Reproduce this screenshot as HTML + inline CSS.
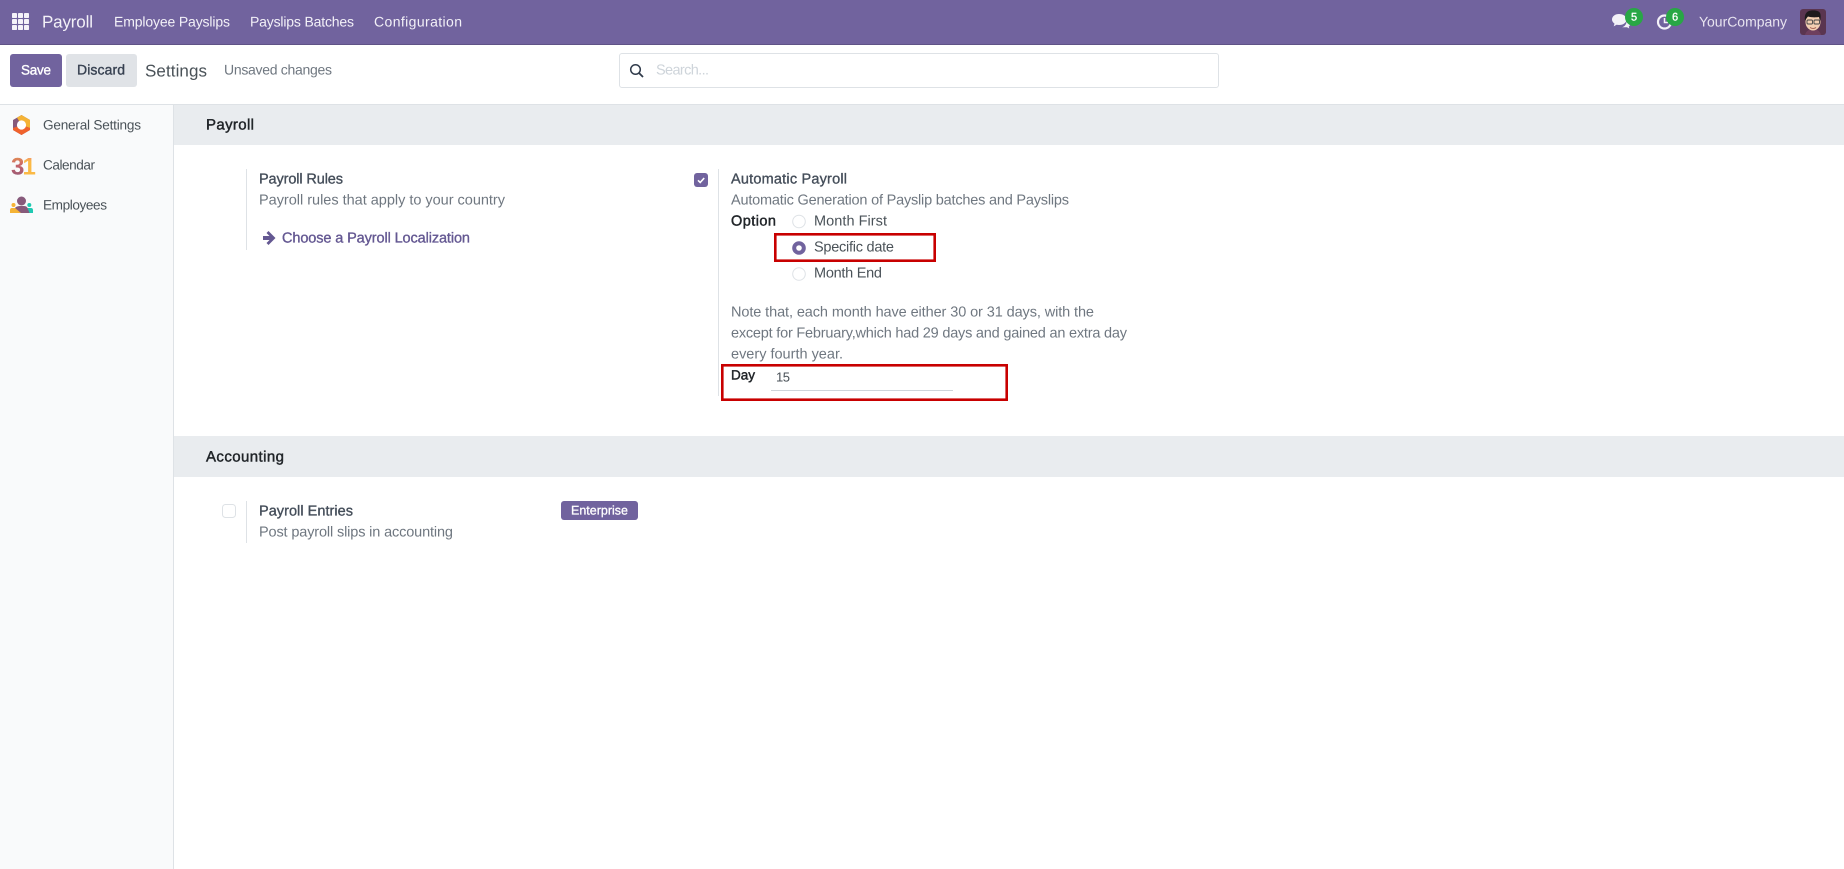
<!DOCTYPE html>
<html lang="en">
<head>
<meta charset="utf-8">
<title>Settings - Payroll</title>
<style>
html,body{margin:0;padding:0;width:1844px;height:869px;overflow:hidden;background:#fff}
.box{position:absolute;box-sizing:border-box}
svg{position:absolute;left:0;top:0}
text{font-family:"Liberation Sans",sans-serif;font-size:14.5px;white-space:pre;text-rendering:geometricPrecision;transform:translateY(-.5px)}
.nav{fill:#f3f1f8;font-size:14px}
.dark{fill:#454e5a;stroke:#454e5a;stroke-width:.35px}
.mut{fill:#6f7780}
.side{fill:#4a5258;font-size:13.6px}
.head{fill:#212529;stroke:#212529;stroke-width:.45px;font-size:15px}
.lab{fill:#212529;stroke:#212529;stroke-width:.45px;font-size:14px}
.opt{fill:#4a5258}
</style>
</head>
<body>
<div class="box" style="left:0;top:0;width:1844px;height:45px;background:#71639e;border-bottom:1px solid #5f5386"></div>
<div class="box" style="left:0;top:104px;width:1844px;height:1px;background:#dee2e6"></div>
<div class="box" style="left:0;top:105px;width:174px;height:764px;background:#f9fafb;border-right:1px solid #dee2e6"></div>
<div class="box" style="left:174px;top:105px;width:1670px;height:40px;background:#e9ecef"></div>
<div class="box" style="left:174px;top:436px;width:1670px;height:41px;background:#e9ecef"></div>
<div class="box" style="left:10px;top:54px;width:52px;height:33px;background:#71639e;border-radius:3px"></div>
<div class="box" style="left:66px;top:54px;width:71px;height:33px;background:#e0e3e7;border-radius:3px"></div>
<div class="box" style="left:619px;top:53px;width:600px;height:35px;background:#fff;border:1px solid #dee2e6;border-radius:3px"></div>
<div class="box" style="left:246px;top:169px;width:1px;height:81px;background:#dee2e6"></div>
<div class="box" style="left:718px;top:169px;width:1px;height:227px;background:#dee2e6"></div>
<div class="box" style="left:246px;top:501px;width:1px;height:42px;background:#dee2e6"></div>
<div class="box" style="left:771px;top:390px;width:182px;height:1px;background:#ced4da"></div>
<div class="box" style="left:561px;top:501px;width:77px;height:19px;background:#71639e;border-radius:3px"></div>

<svg width="1844" height="869" viewBox="0 0 1844 869" xmlns="http://www.w3.org/2000/svg">
<defs>
<linearGradient id="g3" x1="0" y1="0" x2="0" y2="1"><stop offset="0" stop-color="#f0a04b"/><stop offset=".45" stop-color="#c4606a"/><stop offset="1" stop-color="#875a7b"/></linearGradient>
<linearGradient id="g1" x1="0" y1="0" x2="0" y2="1"><stop offset="0" stop-color="#e8748a"/><stop offset=".3" stop-color="#fbb945"/><stop offset="1" stop-color="#fbb945"/></linearGradient>
</defs>

<!-- apps grid -->
<g fill="#f5f3f9">
<rect x="12" y="13" width="5" height="5" rx=".8"/><rect x="18" y="13" width="5" height="5" rx=".8"/><rect x="24" y="13" width="5" height="5" rx=".8"/>
<rect x="12" y="19" width="5" height="5" rx=".8"/><rect x="18" y="19" width="5" height="5" rx=".8"/><rect x="24" y="19" width="5" height="5" rx=".8"/>
<rect x="12" y="25" width="5" height="5" rx=".8"/><rect x="18" y="25" width="5" height="5" rx=".8"/><rect x="24" y="25" width="5" height="5" rx=".8"/>
</g>

<!-- nav text -->
<text class="nav" x="42" y="28" style="font-size:17px" textLength="51">Payroll</text>
<text class="nav" x="114" y="27" textLength="116">Employee Payslips</text>
<text class="nav" x="250" y="27" textLength="104">Payslips Batches</text>
<text class="nav" x="374" y="27" textLength="88">Configuration</text>

<!-- systray -->
<path d="M1619 14c4.400 0 7.500 2.400 7.500 5.500s-3.100 5.500-7.500 5.500l-2.500-.2-2.800 1.600.8-2.800c-1.500-1-2.500-2.400-2.500-4.100 0-3.100 3-5.500 7-5.500z" fill="#f3f1f8"/>
<path d="M1626.500 21.500c2 .6 3.500 1.700 3.500 3 0 1-.6 1.700-1.300 2.200l.6 1.800-2.300-1.200h-5c2.500-.6 4.500-3 4.500-5.800z" fill="#f3f1f8"/>
<circle cx="1634" cy="17" r="9" fill="#28a745"/>
<text x="1634" y="21" text-anchor="middle" style="font-size:11px;fill:#fff;stroke:#fff;stroke-width:.3px">5</text>
<circle cx="1664.500" cy="22" r="6.500" fill="none" stroke="#f3f1f8" stroke-width="2.200"/>
<path d="M1664.500 18v4.500h3.500" fill="none" stroke="#f3f1f8" stroke-width="1.500"/>
<circle cx="1675" cy="17" r="9" fill="#28a745"/>
<text x="1675" y="21" text-anchor="middle" style="font-size:11px;fill:#fff;stroke:#fff;stroke-width:.3px">6</text>
<text x="1699" y="27" textLength="88" style="fill:#e8e4f0;font-size:14px">YourCompany</text>

<!-- avatar -->
<rect x="1800" y="9" width="26" height="26" rx="3" fill="#5a3550"/>
<path d="M1805 35c1-4 4-6 8-6s7 2 8 6z" fill="#6e3f5e"/>
<ellipse cx="1813" cy="22" rx="7.500" ry="8.500" fill="#f3cfb2"/>
<path d="M1805 21c-1-6 1-10 6-10.500 4-.5 9 0 9.500 4 .4 2.500 0 5-.5 6.500l-1-4c-3 .5-8 .5-11-.5-1 1-2 2.500-3 4.500z" fill="#1d1a1c"/>
<rect x="1807" y="20" width="5.500" height="4" rx="1" fill="none" stroke="#444" stroke-width=".9"/>
<rect x="1814" y="20" width="5.500" height="4" rx="1" fill="none" stroke="#444" stroke-width=".9"/>
<path d="M1810 27.500c2 1.200 4.500 1.200 6 0" fill="none" stroke="#a0584a" stroke-width="1"/>

<!-- control panel -->
<text x="21" y="75" textLength="30" style="fill:#fff;stroke:#fff;stroke-width:.35px;font-size:13.500px">Save</text>
<text x="77" y="75" textLength="48" style="fill:#374151;stroke:#374151;stroke-width:.35px;font-size:14px">Discard</text>
<text x="145" y="77" textLength="62" style="fill:#4a5258;font-size:17px">Settings</text>
<text class="mut" x="224" y="75" textLength="108" style="font-size:14px">Unsaved changes</text>
<circle cx="635.500" cy="69.500" r="4.800" fill="none" stroke="#2f3a4a" stroke-width="1.500"/>
<path d="M639 73l4 4" stroke="#2f3a4a" stroke-width="1.800" fill="none"/>
<text x="656" y="75" textLength="53" style="fill:#ced4da;font-size:14.500px">Search...</text>

<!-- sidebar icons -->
<path d="M21.500 115l8.500 5v10l-8.500 5-8.500-5v-10z" fill="#875a7b"/>
<path d="M17 117.600l4.500-2.600 8.500 5v8l-8.500-3z" fill="#f5b335"/>
<path d="M30 128v2l-8.500 5-8.500-5v-2l8.500-3z" fill="#f0622c"/>
<circle cx="21.500" cy="125" r="4.600" fill="#fff"/>
<text x="11" y="175" style="font-size:24px;font-weight:bold;fill:url(#g3)">3</text>
<text x="22.500" y="175" style="font-size:24px;font-weight:bold;fill:url(#g1)">1</text>
<circle cx="21.500" cy="201" r="4.500" fill="#875a7b"/>
<circle cx="13.500" cy="205" r="2" fill="#f5b335"/>
<circle cx="29.300" cy="205" r="2" fill="#1fc9b2"/>
<path d="M10 213v-3c0-1.200 .8-2 2-2h9v5z" fill="#f5b335"/>
<path d="M33 213v-3c0-1.200-.8-2-2-2h-9v5z" fill="#1fc9b2"/>
<path d="M15 208c1-1.500 3-2 5-2h4c2 0 3 1 3.500 2l2 5H21z" fill="#875a7b"/>

<text class="side" x="43" y="130" textLength="98">General Settings</text>
<text class="side" x="43" y="170" textLength="52">Calendar</text>
<text class="side" x="43" y="210" textLength="64">Employees</text>

<!-- section headers -->
<text class="head" x="206" y="130" textLength="48">Payroll</text>
<text class="head" x="206" y="462" textLength="78">Accounting</text>

<!-- payroll rules -->
<text class="dark" x="259" y="184" textLength="84">Payroll Rules</text>
<text class="mut" x="259" y="205" textLength="246">Payroll rules that apply to your country</text>
<path d="M263 236h6.500l-3-3 2-2 7 7-7 7-2-2 3-3H263z" fill="#645892"/>
<text x="282" y="243" textLength="188" style="fill:#645892;stroke:#645892;stroke-width:.35px">Choose a Payroll Localization</text>

<!-- automatic payroll -->
<rect x="694" y="173" width="14" height="14" rx="3" fill="#71639e"/>
<path d="M698 180.300l2.200 2.200 4-4.400" fill="none" stroke="#fff" stroke-width="1.600"/>
<text class="dark" x="731" y="184" textLength="116">Automatic Payroll</text>
<text class="mut" x="731" y="205" textLength="338">Automatic Generation of Payslip batches and Payslips</text>
<text class="lab" x="731" y="226" textLength="45" style="font-size:14.500px">Option</text>
<circle cx="799" cy="221.500" r="6.300" fill="#fff" stroke="#dee2e6"/>
<text class="opt" x="814" y="226" textLength="73">Month First</text>
<circle cx="799" cy="248" r="6.800" fill="#71639e"/>
<circle cx="799" cy="248" r="2.800" fill="#fff"/>
<text class="opt" x="814" y="252" textLength="80">Specific date</text>
<circle cx="799" cy="274" r="6.300" fill="#fff" stroke="#dee2e6"/>
<text class="opt" x="814" y="278" textLength="68">Month End</text>
<text class="mut" x="731" y="317" textLength="363">Note that, each month have either 30 or 31 days, with the</text>
<text class="mut" x="731" y="338" textLength="396">except for February,which had 29 days and gained an extra day</text>
<text class="mut" x="731" y="359" textLength="112">every fourth year.</text>
<text class="lab" x="731" y="380" textLength="24" style="font-size:13.500px">Day</text>
<text x="776" y="382" textLength="14" style="fill:#4a5258;font-size:13px">15</text>

<!-- red annotation boxes -->
<rect x="775.300" y="234.300" width="159.400" height="26.400" fill="none" stroke="#c80000" stroke-width="2.600"/>
<rect x="722.300" y="365.300" width="284.400" height="34.400" fill="none" stroke="#c80000" stroke-width="2.600"/>

<!-- payroll entries -->
<rect x="222.500" y="504.500" width="13" height="13" rx="3" fill="#fff" stroke="#dee2e6"/>
<text class="dark" x="259" y="516" textLength="94">Payroll Entries</text>
<text class="mut" x="259" y="537" textLength="194">Post payroll slips in accounting</text>
<text x="571" y="515" textLength="57" style="fill:#fff;stroke:#fff;stroke-width:.3px;font-size:12.500px">Enterprise</text>
</svg>
</body>
</html>
